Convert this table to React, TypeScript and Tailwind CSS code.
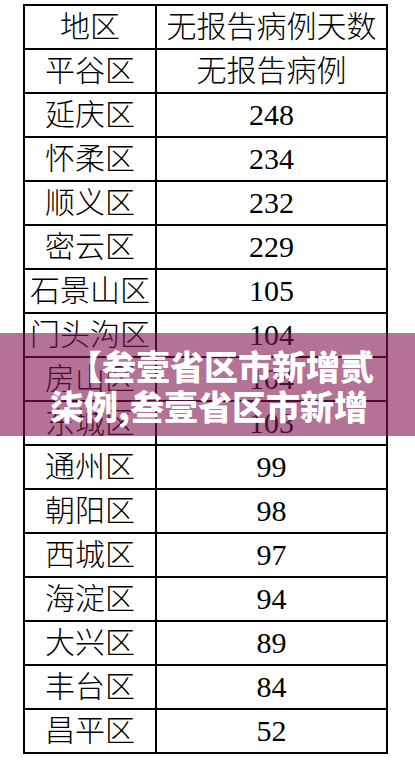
import React from 'react'

const rows: [string, string][] = [
  ['平谷区', '无报告病例'],
  ['延庆区', '248'],
  ['怀柔区', '234'],
  ['顺义区', '232'],
  ['密云区', '229'],
  ['石景山区', '105'],
  ['门头沟区', '104'],
  ['房山区', '104'],
  ['东城区', '103'],
  ['通州区', '99'],
  ['朝阳区', '98'],
  ['西城区', '97'],
  ['海淀区', '94'],
  ['大兴区', '89'],
  ['丰台区', '84'],
  ['昌平区', '52'],
]

const cellFont = { fontFamily: '"Liberation Serif", "Noto Sans CJK SC", serif' }

const Row = ({ area, value, first }: { area: string; value: string; first?: boolean }) => (
  <div className={`grid grid-cols-[130px_2px_1fr] ${first ? 'h-[42px]' : 'h-[44px] border-t-2 border-black'}`}>
    <div className="flex items-center justify-center text-[30px] leading-none font-light text-black whitespace-nowrap">
      {area}
    </div>
    <div className="bg-black" />
    <div className="flex items-center justify-center text-[30px] leading-none font-light text-black whitespace-nowrap">
      {value}
    </div>
  </div>
)

export default function App() {
  return (
    <div className="relative w-[415px] h-[769px] bg-white overflow-hidden">
      <div className="pt-[4px] pl-[23px]">
        <div className="w-[365px] border-2 border-black" style={cellFont}>
          <Row area="地区" value="无报告病例天数" first />
          {rows.map(([a, v]) => (
            <Row key={a} area={a} value={v} />
          ))}
        </div>
      </div>

      {/* title banner over the table */}
      <div className="absolute left-0 right-0 top-[333px] h-[103px] bg-[rgba(128,20,80,0.6)] pt-[13px]">
        <p
          className="ml-[50px] w-[335px] indent-[18px] text-[34px] leading-[40px] font-black text-white"
          style={{ fontFamily: '"Noto Sans CJK SC", "Noto Sans", sans-serif' }}
        >
          【叁壹省区市新增贰柒例,叁壹省区市新增
        </p>
      </div>
    </div>
  )
}
